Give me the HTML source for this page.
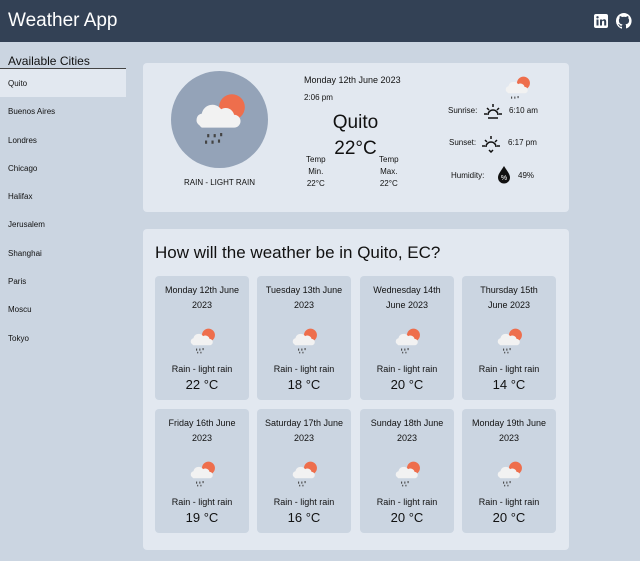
<!DOCTYPE html><html><head><style>
*{margin:0;padding:0;box-sizing:border-box}
body{width:640px;height:561px;background:#cbd5e1;font-family:"Liberation Sans",sans-serif;color:#111;position:relative;overflow:hidden}
.hdr{position:absolute;left:0;top:0;width:640px;height:42px;background:#334155;color:#fff}
.hdr h1{position:absolute;left:8px;top:10px;font-size:19px;font-weight:normal}
.side{position:absolute;left:0;top:54px;width:126px}
.side h2{font-size:12px;font-weight:normal;padding-left:8px;height:15px;border-bottom:1px solid #444}
.city{font-size:8px;height:28.3px;line-height:30px;padding-left:8px}
.city.sel{background:#e2e8f0}
.card{position:absolute;background:#e2e8f0;border-radius:4px}
.ab{position:absolute;font-size:8px;text-align:center}
.fc{position:absolute;width:94px;height:124px;background:#cbd5e1;border-radius:4px;text-align:center;font-size:9px}
.fc .d{margin-top:7px;line-height:15px}
.fc svg{display:block;margin:14px auto 9px}
.fc .r{font-size:9px}
.fc .t{font-size:13px;margin-top:3px}
</style></head><body>
<div class="hdr"><h1>Weather App</h1>
<svg style="position:absolute;left:594px;top:14px" width="14" height="14"><rect width="14" height="14" rx="2" fill="#fff"/><rect x="2.5" y="5.5" width="2" height="6" fill="#334155"/><circle cx="3.5" cy="3.3" r="1.2" fill="#334155"/><path d="M6 5.5h2v1c.5-.8 1.3-1.2 2.2-1.2 1.5 0 2 1 2 2.5v3.7h-2V8c0-.8-.3-1.2-1-1.2S8 7.3 8 8v3.5H6z" fill="#334155"/></svg>
<svg style="position:absolute;left:616px;top:13px" width="16" height="16" viewBox="0 0 16 16"><path fill="#fff" d="M8 0a8 8 0 0 0-2.5 15.6c.4 0 .5-.2.5-.4v-1.5c-2.200.5-2.7-1-2.7-1-.4-.9-.9-1.2-.9-1.2-.7-.5.1-.5.1-.5.8.1 1.2.8 1.2.8.7 1.3 1.9.9 2.3.7.1-.5.3-.9.5-1.1-1.8-.2-3.6-.9-3.6-4 0-.9.3-1.6.8-2.1-.1-.2-.4-1 .1-2.1 0 0 .7-.2 2.2.8a7.5 7.5 0 0 1 4 0c1.5-1 2.2-.8 2.2-.8.4 1.1.2 1.900.1 2.1.5.6.8 1.3.8 2.1 0 3.1-1.9 3.7-3.6 3.9.3.3.5.8.5 1.5v2.2c0 .2.1.5.6.4A8 8 0 0 0 8 0z"/></svg>
</div>
<div class="side"><h2>Available Cities</h2>
<div class="city sel">Quito</div><div class="city">Buenos Aires</div><div class="city">Londres</div><div class="city">Chicago</div><div class="city">Halifax</div><div class="city">Jerusalem</div><div class="city">Shanghai</div><div class="city">Paris</div><div class="city">Moscu</div><div class="city">Tokyo</div></div>

<div class="card" style="left:143px;top:63px;width:426px;height:149px">
<div style="position:absolute;left:28px;top:8px;width:97px;height:97px;border-radius:50%;background:#94a3b8"></div>
<svg style="position:absolute;left:48px;top:28px" width="56" height="56" viewBox="0 0 52 52"><circle cx="38" cy="15" r="12" fill="#ee6e4c"/><path d="M8 32a6 6 0 0 1 2-11 10 10 0 0 1 18-4 8 8 0 0 1 12 5 6 6 0 0 1 0 12H10a6 6 0 0 1-2-2z" fill="#f2f2f2"/><g fill="#444"><rect x="15" y="40" width="2" height="3"/><rect x="21" y="40" width="2" height="3"/><rect x="27" y="39" width="2" height="3"/><rect x="13" y="46" width="2" height="3"/><rect x="19" y="46" width="2" height="3"/><rect x="25" y="45" width="2" height="3"/></g></svg>
<div class="ab" style="left:28px;top:115px;width:97px">RAIN - LIGHT RAIN</div>
<div class="ab" style="left:161px;top:12px;font-size:9px">Monday 12th June 2023</div>
<div class="ab" style="left:161px;top:30px">2:06 pm</div>
<div class="ab" style="left:150px;top:49px;width:125px;font-size:19px">Quito</div>
<div class="ab" style="left:150px;top:75px;width:125px;font-size:19px">22°C</div>
<div class="ab" style="left:163px;top:91px;line-height:12px">Temp<br>Min.<br>22°C</div>
<div class="ab" style="left:236px;top:91px;line-height:12px">Temp<br>Max.<br>22°C</div>
<svg style="position:absolute;left:360px;top:12px" width="28" height="28" viewBox="0 0 52 52"><circle cx="38" cy="15" r="12" fill="#ee6e4c"/><path d="M8 32a6 6 0 0 1 2-11 10 10 0 0 1 18-4 8 8 0 0 1 12 5 6 6 0 0 1 0 12H10a6 6 0 0 1-2-2z" fill="#f2f2f2"/><g fill="#444"><rect x="15" y="40" width="2" height="4"/><rect x="21" y="40" width="2" height="4"/><rect x="27" y="39" width="2" height="4"/></g></svg>
<div class="ab" style="left:305px;top:43px">Sunrise:</div>
<svg style="position:absolute;left:340px;top:38px" width="20" height="20" viewBox="0 0 20 20" stroke="#111" stroke-width="1.5" fill="none"><path d="M5 14a5 5 0 0 1 10 0M1 13h3M16 13h3M10 3v3M4 7l2 2M16 7l-2 2M5 17h10"/></svg>
<div class="ab" style="left:366px;top:43px">6:10 am</div>
<div class="ab" style="left:306px;top:75px">Sunset:</div>
<svg style="position:absolute;left:338px;top:70px" width="20" height="20" viewBox="0 0 20 20" stroke="#111" stroke-width="1.5" fill="none"><path d="M5 14a5 5 0 0 1 10 0M1 13h3M16 13h3M10 3v3M4 7l2 2M16 7l-2 2M8 17l2 2 2-2"/></svg>
<div class="ab" style="left:365px;top:75px">6:17 pm</div>
<div class="ab" style="left:308px;top:108px">Humidity:</div>
<svg style="position:absolute;left:354px;top:103px" width="14" height="18" viewBox="0 0 14 18"><path d="M7 0C4 5 1 8 1 11.5a6 6 0 0 0 12 0C13 8 10 5 7 0z" fill="#111"/><text x="7" y="14" font-size="7" fill="#fff" text-anchor="middle" font-family="Liberation Sans">%</text></svg>
<div class="ab" style="left:375px;top:108px">49%</div>
</div>

<div class="card" style="left:143px;top:229px;width:426px;height:321px">
<div style="position:absolute;left:12px;top:14px;font-size:17px">How will the weather be in Quito, EC?</div>
</div>
<div id="fcs"></div>
<script>
var d=[["Monday 12th June<br>2023","22"],["Tuesday 13th June<br>2023","18"],["Wednesday 14th<br>June 2023","20"],["Thursday 15th<br>June 2023","14"],["Friday 16th June<br>2023","19"],["Saturday 17th June<br>2023","16"],["Sunday 18th June<br>2023","20"],["Monday 19th June<br>2023","20"]];
var xs=[155,257,360,462],ys=[276,409],h="";
var ic='<svg width="28" height="28" viewBox="0 0 52 52"><circle cx="38" cy="15" r="12" fill="#ee6e4c"/><path d="M8 32a6 6 0 0 1 2-11 10 10 0 0 1 18-4 8 8 0 0 1 12 5 6 6 0 0 1 0 12H10a6 6 0 0 1-2-2z" fill="#f2f2f2"/><g fill="#444"><rect x="15" y="40" width="2" height="4"/><rect x="21" y="40" width="2" height="4"/><rect x="27" y="39" width="2" height="4"/><rect x="17" y="46" width="2" height="3"/><rect x="23" y="46" width="2" height="3"/></g></svg>';
d.forEach(function(e,i){h+='<div class="fc" style="left:'+xs[i%4]+'px;top:'+ys[i>>2]+'px"><div class="d">'+e[0]+'</div>'+ic+'<div class="r">Rain - light rain</div><div class="t">'+e[1]+' °C</div></div>'});
document.getElementById("fcs").innerHTML=h;
</script>
</body></html>
